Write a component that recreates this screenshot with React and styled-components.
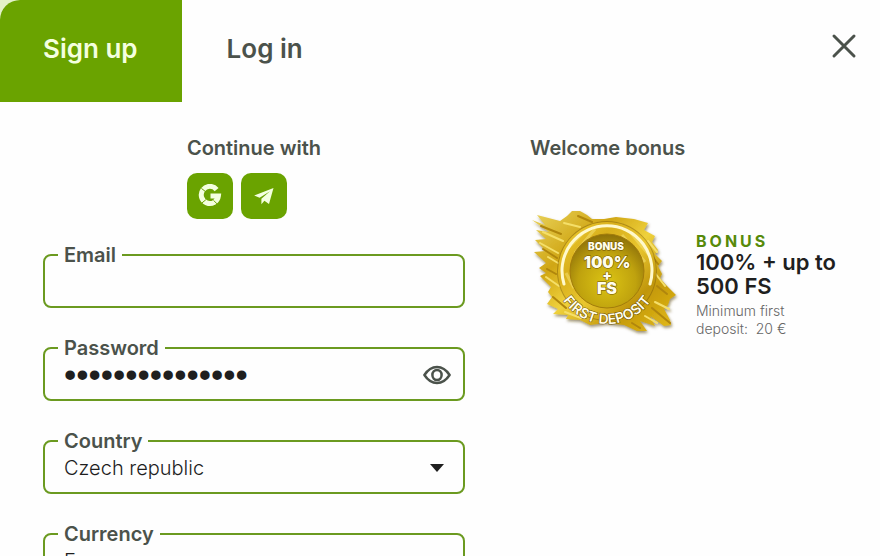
import React, { useState } from "react";
import styled, { createGlobalStyle, ThemeProvider } from "styled-components";

const theme = {
  colors: {
    primary: "#6aa300",
    border: "#6b9a20",
    background: "#fefefe",
    corner: "#e3f2c8",
    label: "#4b524b",
    text: "#1f1f1f",
    subText: "#666666",
  },
};

const GlobalStyle = createGlobalStyle`
  * {
    box-sizing: border-box;
  }

  body {
    margin: 0;
    overflow: hidden;
    background: ${theme.colors.corner};
    font-family: Inter, "Liberation Sans", sans-serif;
  }

  button,
  input,
  select {
    font-family: inherit;
  }
`;

const Modal = styled.main`
  width: 100%;
  height: 100vh;
  overflow: hidden;
  border-top-left-radius: 20px;
  background: ${(props) => props.theme.colors.background};
`;

const Header = styled.header`
  display: flex;
  align-items: flex-start;
  justify-content: space-between;
  padding-right: 20px;
`;

const Tabs = styled.nav`
  display: flex;
  gap: 2px;
`;

const Tab = styled.button`
  height: 102px;
  padding: 0 44px 4px 43px;
  border: 0;
  font-size: 26px;
  line-height: 32px;
  font-weight: 600;
  cursor: pointer;
  color: ${(props) => (props.$active ? "#f4ffdf" : props.theme.colors.label)};
  background: ${(props) =>
    props.$active ? props.theme.colors.primary : "transparent"};
`;

const CloseButton = styled.button`
  display: flex;
  margin-top: 30px;
  padding: 0;
  border: 0;
  background: none;
  cursor: pointer;
`;

const Content = styled.div`
  display: grid;
  grid-template-columns: minmax(0, 422fr) minmax(0, 306fr);
  column-gap: 65px;
  padding: 34px 44px 0 43px;
`;

const Heading = styled.h2`
  margin: 0;
  font-size: 20px;
  line-height: 24px;
  font-weight: 600;
  color: ${(props) => props.theme.colors.label};
`;

const Form = styled.form`
  display: flex;
  flex-direction: column;
  gap: 24px;
`;

const Social = styled.div`
  align-self: center;
`;

const SocialRow = styled.div`
  display: flex;
  gap: 8px;
  margin-top: 13px;
`;

const SocialButton = styled.button`
  display: flex;
  align-items: center;
  justify-content: center;
  width: 46px;
  height: 46px;
  padding: 0;
  border: 0;
  border-radius: 10px;
  background: ${(props) => props.theme.colors.primary};
  cursor: pointer;
`;

const Fields = styled.div`
  display: flex;
  flex-direction: column;
  gap: 28px;
`;

const Field = styled.fieldset`
  min-width: 0;
  margin: 0;
  padding: 0 12px 0 13px;
  border: 2px solid ${(props) => props.theme.colors.border};
  border-radius: 8px;
`;

const Legend = styled.legend`
  padding: 0 6px;
  font-size: 20px;
  line-height: 24px;
  font-weight: 600;
  color: ${(props) => props.theme.colors.label};
`;

const Control = styled.div`
  display: flex;
  align-items: center;
  height: 39px;
  padding-bottom: 9px;
`;

const Input = styled.input`
  flex: 1;
  min-width: 0;
  height: 30px;
  padding: 0 6px;
  border: 0;
  outline: 0;
  background: transparent;
  font-size: 20px;
  color: ${(props) => props.theme.colors.text};

  &[type="password"] {
    font-family: "Liberation Sans", sans-serif;
    font-size: 35px;
  }
`;

const Select = styled.select`
  flex: 1;
  min-width: 0;
  height: 30px;
  padding: 0 6px;
  border: 0;
  outline: 0;
  appearance: none;
  background: transparent;
  font-size: 20px;
  font-weight: 300;
  color: ${(props) => props.theme.colors.text};
`;

const IconButton = styled.button`
  display: flex;
  padding: 0;
  border: 0;
  background: none;
  cursor: pointer;
`;

const Caret = styled.svg`
  flex: none;
  margin-right: 7px;
  pointer-events: none;
`;

const Bonus = styled.div`
  display: grid;
  grid-template-columns: 150px minmax(0, 1fr);
  column-gap: 16px;
  align-items: start;
  margin-top: 48px;
`;

const MedalArt = styled.svg`
  overflow: visible;
`;

const BonusInfo = styled.div`
  padding-top: 24px;
`;

const BonusTag = styled.div`
  font-size: 16px;
  line-height: 18px;
  font-weight: 700;
  letter-spacing: 3px;
  color: #578a0a;
`;

const BonusTitle = styled.h3`
  margin: 0;
  font-size: 22px;
  line-height: 24px;
  font-weight: 600;
  color: ${(props) => props.theme.colors.text};
`;

const BonusNote = styled.p`
  max-width: 110px;
  margin: 4px 0 0;
  font-size: 14px;
  line-height: 18px;
  font-weight: 300;
  color: ${(props) => props.theme.colors.subText};
`;

const GoogleIcon = () => (
  <svg width="24" height="24" viewBox="0 0 24 24" fill="none">
    <path
      d="M18.6 5.6A8.6 8.6 0 1 0 20.4 12H12.5"
      stroke="#f4ffdf"
      strokeWidth="5"
    />
    <path
      d="M7.8 7.8 3.4 4.4M7.8 15.8l-4.2 3.4M15.6 16.4l3.6 3.6"
      stroke={theme.colors.primary}
      strokeWidth="1"
    />
  </svg>
);

const TelegramIcon = () => (
  <svg width="22" height="20" viewBox="0 0 22 20" fill="#f4ffdf">
    <path d="M20.5 2 1.2 9.5l5.4 2.2L17 5.2 8.4 12.8v5.4l3-3.4 4.6 3.2z" />
  </svg>
);

const EyeIcon = () => (
  <svg width="28" height="20" viewBox="0 0 28 20" fill="none" stroke="#4b524b">
    <path
      d="M1.4 10C4.8 4.8 9.1 2 14 2s9.2 2.8 12.6 8c-3.4 5.2-7.7 8-12.6 8S4.8 15.2 1.4 10z"
      strokeWidth="2.5"
      strokeLinejoin="round"
    />
    <ellipse cx="14" cy="10" rx="4.6" ry="5" strokeWidth="2.5" />
  </svg>
);

const Medal = () => (
  <MedalArt
    width="150"
    height="130"
    viewBox="530 208 150 130"
    role="img"
    aria-label="Bonus 100% + FS, first deposit"
  >
    <defs>
      <linearGradient id="paint" x1="0" y1="0" x2="1" y2="1">
        <stop offset="0" stopColor="#ead45c" />
        <stop offset="0.3" stopColor="#d0a615" />
        <stop offset="0.5" stopColor="#efd13c" />
        <stop offset="0.75" stopColor="#c59a0c" />
        <stop offset="1" stopColor="#e5bd19" />
      </linearGradient>
      <linearGradient id="ring" x1="0" y1="0" x2="1" y2="1">
        <stop offset="0" stopColor="#f0d034" />
        <stop offset="0.3" stopColor="#d9b01c" />
        <stop offset="0.55" stopColor="#e9c62f" />
        <stop offset="0.8" stopColor="#c0960c" />
        <stop offset="1" stopColor="#d5ab14" />
      </linearGradient>
      <radialGradient id="disc" cx="0.5" cy="0.65" r="0.65">
        <stop offset="0" stopColor="#dcc414" />
        <stop offset="0.6" stopColor="#bfa20e" />
        <stop offset="1" stopColor="#8d7009" />
      </radialGradient>
      <filter id="shade" x="-10%" y="-10%" width="125%" height="125%">
        <feDropShadow
          dx="1"
          dy="2"
          stdDeviation="1.5"
          floodColor="#5b4a18"
          floodOpacity="0.6"
        />
      </filter>
      <path id="rim" d="M554 271a53 53 0 0 0 106 0" />
    </defs>

    <g filter="url(#shade)">
      <path
        fill="url(#paint)"
        d="M532 220L545 225L537 215L560 221L567 216L572 211L580 211L587 215L592 219L604 219L616 217L634 219L648 223L644 230L655 236L652 242L658 250L655 254L662 261L658 266L662 274L660 278L665 284L676 295L670 299L668 305L664 309L670 320L671 325L664 326L650 316L655 326L640 321L647 331L637 331L624 325L606 323L590 325L580 320L566 319L568 315L553 314L558 309L547 304L552 297L548 292L551 287L540 276L546 273L539 268L546 263L534 252L546 251L535 240L546 239L536 230L549 232Z"
      />
      <g fill="none" strokeLinecap="round">
        <path
          d="M543 232l20 9M540 243l18 10M548 257l10 6M546 277l13 9M564 223l16 4M648 241l9 11M655 273l10 13M655 302l14 7M645 316l12 7M565 312l16 6"
          stroke="#f5df69"
          strokeWidth="2"
        />
        <path
          d="M541 226l20 8M543 249l14 9M547 269l9 5M578 216l14 6M652 256l6 8M657 286l10 8M652 308l18 15M553 297l13 11M632 323l8 5"
          stroke="#b0860c"
          strokeWidth="2"
        />
      </g>
    </g>

    <circle cx="607" cy="271" r="50" fill="#7f5f09" opacity="0.5" />
    <circle cx="607" cy="271" r="49" fill="url(#ring)" />
    <path
      d="M567 249l16-16M575 253l20-24M622 235l23 27M630 232l19 23M566 273l8 15"
      stroke="#f7e477"
      strokeWidth="3"
      opacity="0.5"
    />
    <circle
      cx="607"
      cy="271"
      r="37"
      fill="url(#disc)"
      stroke="#a27c0b"
      strokeWidth="1"
    />
    <path
      d="M564 284a45 45 0 1 1 86 0"
      fill="none"
      stroke="#fff9cc"
      strokeWidth="3"
      strokeLinecap="round"
    />
    <g
      fill="#fffdec"
      stroke="#6d5103"
      strokeWidth="1"
      paintOrder="stroke"
      fontFamily="Inter, sans-serif"
      fontWeight="900"
      textAnchor="middle"
    >
      <text x="606" y="250" fontSize="10">
        BONUS
      </text>
      <text x="607" y="268" fontSize="16">
        100%
      </text>
      <text x="607" y="280" fontSize="14">
        +
      </text>
      <text x="607" y="294" fontSize="16">
        FS
      </text>
      <text fontSize="14" fontWeight="600">
        <textPath href="#rim" startOffset="50%">
          FIRST DEPOSIT
        </textPath>
      </text>
    </g>
  </MedalArt>
);

const SelectField = ({ label, options }) => (
  <Field>
    <Legend>{label}</Legend>
    <Control>
      <Select aria-label={label}>
        {options.map((option) => (
          <option key={option}>{option}</option>
        ))}
      </Select>
      <Caret width="14" height="8" viewBox="0 0 14 8">
        <path d="M0 0h14L7 8z" fill="#1f1f1f" />
      </Caret>
    </Control>
  </Field>
);

const App = () => {
  const [tab, setTab] = useState("Sign up");
  const [showPassword, setShowPassword] = useState(false);

  return (
    <ThemeProvider theme={theme}>
      <GlobalStyle />
      <Modal>
        <Header>
          <Tabs>
            {["Sign up", "Log in"].map((name) => (
              <Tab
                key={name}
                type="button"
                $active={tab === name}
                onClick={() => setTab(name)}
              >
                {name}
              </Tab>
            ))}
          </Tabs>
          <CloseButton type="button" aria-label="Close">
            <svg width="32" height="32" viewBox="0 0 32 32">
              <path
                d="M6 6l20 20M26 6L6 26"
                stroke="#4b524b"
                strokeWidth="3"
                strokeLinecap="round"
              />
            </svg>
          </CloseButton>
        </Header>

        <Content>
          <Form>
            <Social>
              <Heading>Continue with</Heading>
              <SocialRow>
                <SocialButton type="button" aria-label="Google">
                  <GoogleIcon />
                </SocialButton>
                <SocialButton type="button" aria-label="Telegram">
                  <TelegramIcon />
                </SocialButton>
              </SocialRow>
            </Social>

            <Fields>
              <Field>
                <Legend>Email</Legend>
                <Control>
                  <Input type="email" aria-label="Email" />
                </Control>
              </Field>
              <Field>
                <Legend>Password</Legend>
                <Control>
                  <Input
                    type={showPassword ? "text" : "password"}
                    aria-label="Password"
                    defaultValue="correcthorse123"
                  />
                  <IconButton
                    type="button"
                    aria-label="Show password"
                    onClick={() => setShowPassword(!showPassword)}
                  >
                    <EyeIcon />
                  </IconButton>
                </Control>
              </Field>
              <SelectField label="Country" options={["Czech republic"]} />
              <SelectField label="Currency" options={["Euro"]} />
            </Fields>
          </Form>

          <section>
            <Heading>Welcome bonus</Heading>
            <Bonus>
              <Medal />
              <BonusInfo>
                <BonusTag>BONUS</BonusTag>
                <BonusTitle>100% + up to 500 FS</BonusTitle>
                <BonusNote>{"Minimum first deposit: \u00a020 €"}</BonusNote>
              </BonusInfo>
            </Bonus>
          </section>
        </Content>
      </Modal>
    </ThemeProvider>
  );
};

export default App;
